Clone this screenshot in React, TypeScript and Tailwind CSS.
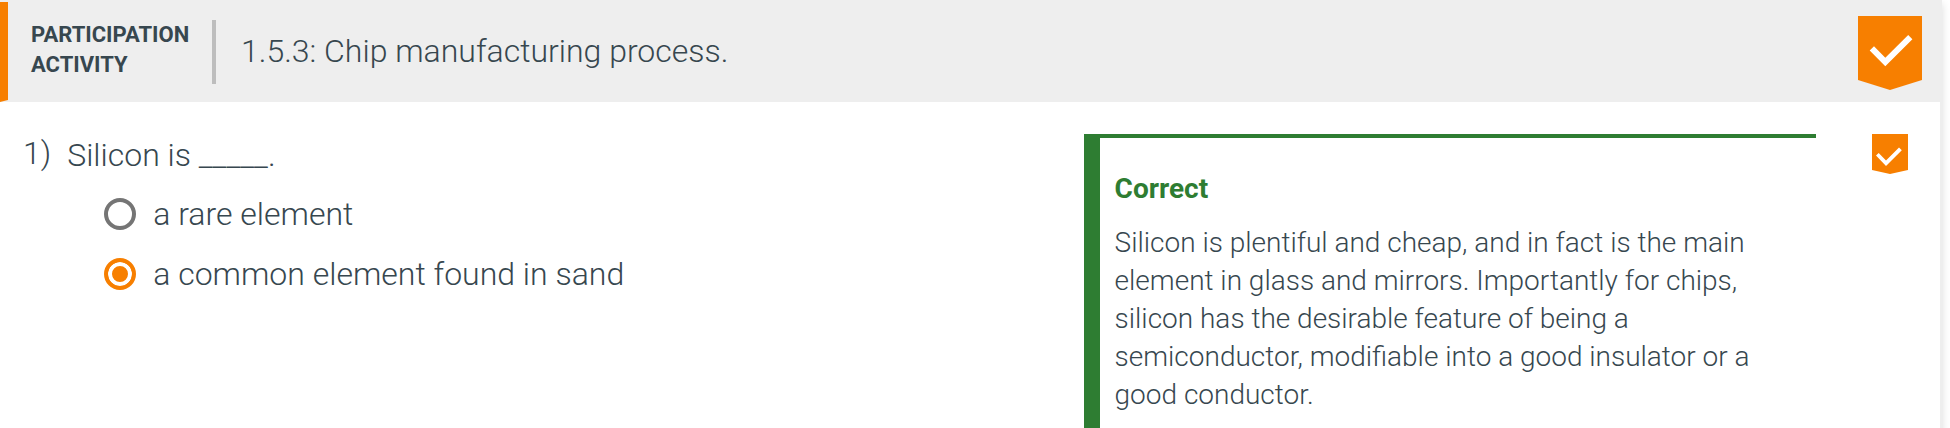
import React, { useState } from "react";

const options = ["a rare element", "a common element found in sand"];

function LargeBadge() {
  return (
    <svg viewBox="0 0 64 74" className="h-[74px] w-16 shrink-0" role="img" aria-label="Activity completed">
      <path d="M0 0H64V64L32 74L0 64Z" fill="#f77f00" />
      <path d="M11.7 34.5L16 30.3L27.3 41.7L50.2 19L54.4 23.2L27.3 50.3Z" fill="#fff" />
    </svg>
  );
}

function SmallBadge() {
  return (
    <svg viewBox="0 0 36 40" className="h-10 w-9" role="img" aria-label="Question completed">
      <path d="M0 0H36V36L18 40L0 36Z" fill="#f77f00" />
      <path d="M4 21.6L6.7 19L14 26.5L27 13.6L29.8 16.3L14 32Z" fill="#fff" />
    </svg>
  );
}

export default function App() {
  const [selected, setSelected] = useState(1);

  return (
    <div className="overflow-hidden bg-white pr-2 font-['Roboto',sans-serif] text-[#37474f]">
      <section className="min-h-screen border-r-2 border-[#eeeeee] shadow-[0_4px_8px_rgba(0,0,0,0.15)]">
        <header className="flex bg-[#eeeeee]">
          <div className="mt-0.5 w-2 bg-[#f77f00] [clip-path:polygon(0_0,100%_0,100%_98%,0_100%)]" />
          <div className="flex flex-1 items-start pt-4 pr-[18px] pb-3 pl-[23px]">
            <div className="mt-1 w-[181px] text-[22px] leading-[30px] font-bold uppercase">
              Participation
              <br />
              activity
            </div>
            <div className="mt-1 h-16 w-1 bg-[#bdbdbd]" />
            <h1 className="flex-1 pl-[25px] text-[32px] leading-[70px] font-light">
              1.5.3: Chip manufacturing process.
            </h1>
            <LargeBadge />
          </div>
        </header>

        <main className="grid grid-cols-[1004fr_732fr_36px] gap-14 pt-8 pr-8 pl-[23px]">
          <fieldset className="flex gap-4 text-[32px] font-light">
            <span className="leading-[38px]">1)</span>
            <div>
              <legend className="leading-[42px]">Silicon is _____.</legend>
              <div className="mt-2 pl-[37px]">
                {options.map((option, index) => (
                  <label key={option} className="flex items-center gap-[17px] leading-[60px]">
                    <input
                      type="radio"
                      name="silicon"
                      checked={selected === index}
                      onChange={() => setSelected(index)}
                      className="size-8 shrink-0 appearance-none rounded-full border-4 border-[#757575] bg-white checked:border-[#f77f00] checked:bg-[#f77f00] checked:shadow-[inset_0_0_0_4px_#ffffff]"
                    />
                    {option}
                  </label>
                ))}
              </div>
            </div>
          </fieldset>

          <div className="min-h-[300px] border-t-4 border-l-16 border-[#2e7d32] pt-8 pr-8 pl-[15px] text-[28px] leading-[38px]">
            <h2 className="font-bold text-[#2e7d32]">Correct</h2>
            <p className="mt-4 font-light">
              Silicon is plentiful and cheap, and in fact is the main element in glass and mirrors.
              Importantly for chips, silicon has the desirable feature of being a semiconductor,
              modifiable into a good insulator or a good conductor.
            </p>
          </div>

          <SmallBadge />
        </main>
      </section>
    </div>
  );
}
